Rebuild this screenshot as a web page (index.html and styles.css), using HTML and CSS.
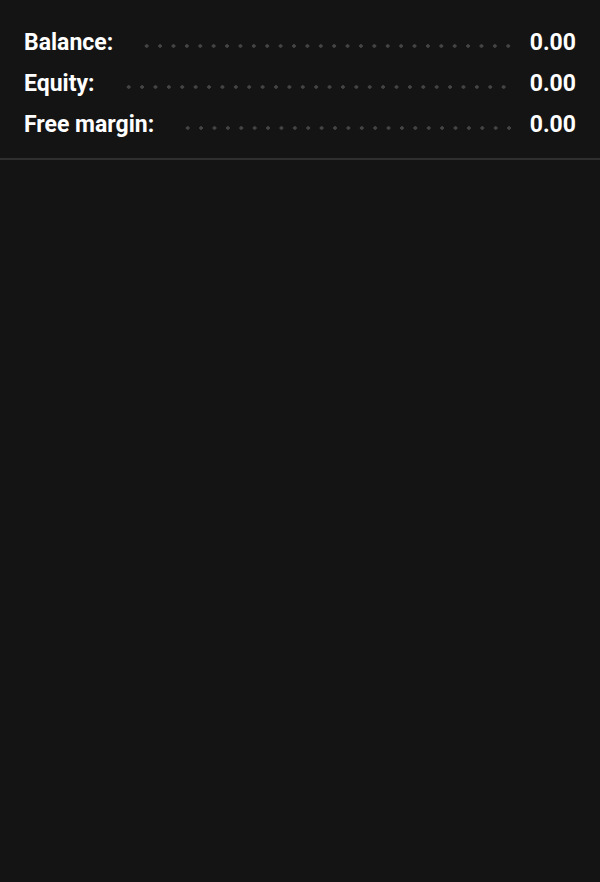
FILE: index.html
```html
<!DOCTYPE html>
<html lang="en">
<head>
<meta charset="UTF-8">
<meta name="viewport" content="width=device-width, initial-scale=1.0">
<title>Account summary</title>
<link rel="stylesheet" href="styles.css">
</head>
<body>

<div class="summary">
  <div class="summary-row">
    <span class="label">Balance:</span>
    <span class="dots"></span>
    <span class="value">0.00</span>
  </div>
  <div class="summary-row">
    <span class="label">Equity:</span>
    <span class="dots"></span>
    <span class="value">0.00</span>
  </div>
  <div class="summary-row">
    <span class="label">Free margin:</span>
    <span class="dots"></span>
    <span class="value">0.00</span>
  </div>
</div>

</body>
</html>
```

FILE: styles.css
```css
body {
  margin: 0;
  background-color: #141414;
  color: #ffffff;
  font-family: Roboto, "Liberation Sans", sans-serif;
}
.summary {
  padding: 22px 24px 13px 24px;
  border-bottom: 2px solid #2f2f2f;
}
.summary-row {
  display: flex;
  align-items: center;
  height: 41px;
  font-size: 23px;
  font-weight: 700;
}
.dots {
  flex: 1;
  height: 4px;
  margin: 6px 18px 0 27px; /* dots sit a bit lower than text middle */
  background-image: radial-gradient(circle, #444444 1.5px, transparent 2px);
  background-size: 13.4px 4px;
  background-repeat: repeat-x;
  background-position: left center;
}
.value {
  text-align: right;
}
```
